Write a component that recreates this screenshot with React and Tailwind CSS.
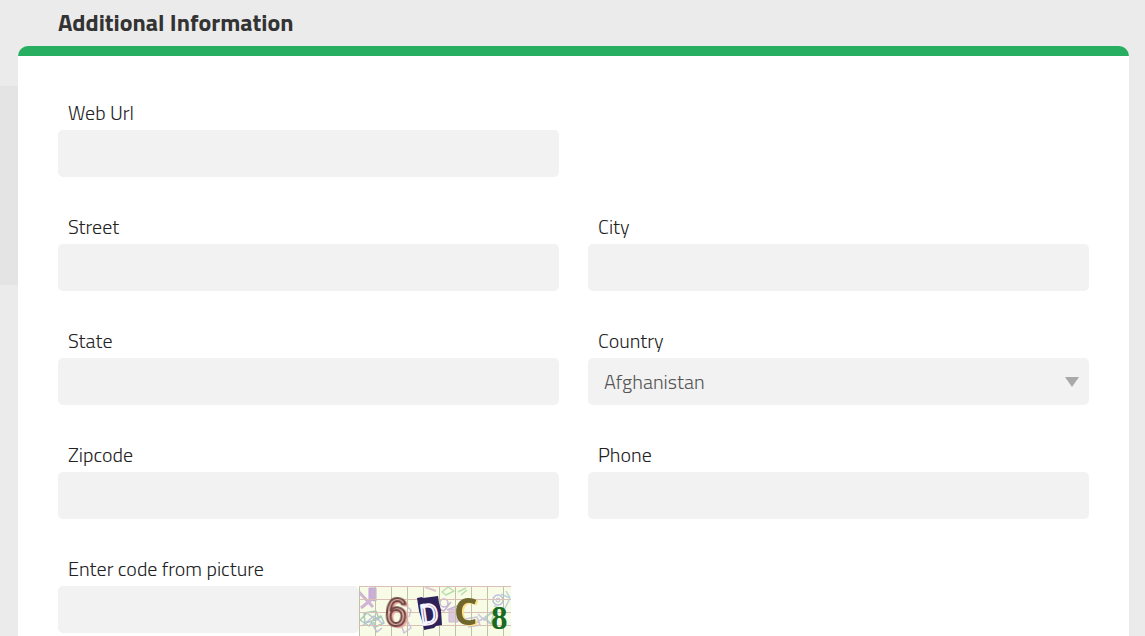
import { useState } from 'react';

const labelClass = 'block mb-[2px] pl-[10px] text-xl leading-[30px] font-light text-[#222]';
const inputClass = 'block w-full h-[47px] rounded-[5px] bg-[#f2f2f2] px-4 text-xl font-light text-[#555] outline-none';

function TextField({ id, label, type = 'text', className = '' }) {
  return (
    <div className={className}>
      <label htmlFor={id} className={labelClass}>{label}</label>
      <input id={id} name={id} type={type} className={inputClass} />
    </div>
  );
}

function CountryField() {
  const [country, setCountry] = useState('Afghanistan');

  return (
    <div>
      <label htmlFor="country" className={labelClass}>Country</label>
      <div className="relative">
        <select
          id="country"
          value={country}
          onChange={(e) => setCountry(e.target.value)}
          className={`${inputClass} appearance-none`}
        >
          <option>Afghanistan</option>
          <option>Albania</option>
          <option>Algeria</option>
        </select>
        <svg
          viewBox="0 0 14 10"
          className="pointer-events-none absolute right-[10px] top-[19px] h-[10px] w-[14px]"
          aria-hidden="true"
        >
          <path d="M0 0h14L7 10z" fill="#a9a9a9" />
        </svg>
      </div>
    </div>
  );
}

function Captcha() {
  const columns = [0, 16, 32, 48, 64, 80, 96, 112, 128, 144];
  const rows = [0, 13, 26, 39, 52];

  return (
    <svg viewBox="0 0 152 60" className="h-[60px] w-[152px] shrink-0" role="img" aria-label="Verification code">
      <rect width="152" height="60" fill="#f8fce6" />

      {/* scribbles behind the characters */}
      <g fill="none" strokeLinejoin="round">
        <path d="M10 2h7v13l-7-1z" fill="#c9addb" stroke="#c3a5d5" />
        <path d="M0 6l14 15M13 13L2 22" stroke="#d0b3d6" strokeWidth="3" />
        <path d="M1 34l7-7 8 6-6 7zM5 27l12-2 3 8-14 4zM14 34l8-4 3 7-9 4z" stroke="#a9cbbd" strokeWidth="1.5" />
        <path d="M3 40l12-10 9 8M12 36l6 10 5-4" stroke="#c0bfdc" strokeWidth="1.5" />
        <path d="M42 38l6-4 4 8-7 5zM46 19l6 5-2 7" stroke="#cfc0e0" strokeWidth="1.5" />
        <path d="M83 6l6-5 6 4-8 4zM99 6l8-4M102 9l6-5" stroke="#b9dfab" strokeWidth="1.5" />
        <path d="M66 1l11 4" stroke="#e0c6ce" strokeWidth="2" />
        <circle cx="85" cy="17" r="4" stroke="#c7b3d5" strokeWidth="1.5" />
        <path d="M78 22l7 3 7-9M88 24l10-4" stroke="#c7b3d5" strokeWidth="1.5" />
        <path d="M90 23h9v13h-9z" fill="#dac9e0" stroke="#cfb8d5" />
        <path d="M106 33l12-2 3 8-11 2zM112 40l13-8 6 6M119 28l6 6 8-9" stroke="#c9c6de" strokeWidth="1.5" />
        <path d="M126 31l9-5-3 12z" stroke="#b4d8ce" strokeWidth="1.5" />
        <circle cx="139" cy="14" r="5" stroke="#bcbde0" strokeWidth="1.5" />
        <circle cx="139" cy="14" r="2" stroke="#bcbde0" />
        <path d="M135 20l10 4 6-12M142 8l9 4M147 5l4 7" stroke="#b9d4de" strokeWidth="1.5" />
      </g>

      {/* grid */}
      {columns.map((x) => (
        <path key={x} d={`M${x + 0.5} 0v60`} stroke="#bfc2a6" />
      ))}
      {rows.map((y) => (
        <path key={y} d={`M0 ${y + 0.5}h152`} stroke="#d9bfb6" />
      ))}

      <path d="M58 12l5-1 1 1 15-2 1 7 2 7 1 15-6 1-2 2-10 2-1-6-4-13z" fill="#2c2158" />

      <g className="font-['Liberation_Sans',sans-serif]" strokeLinejoin="round">
        <text
          x="26"
          y="40"
          fontSize="40"
          fill="#e9b5ae"
          stroke="#6b4540"
          strokeWidth="2"
          className="drop-shadow-[2px_1px_0_#f0aaa3]"
          transform="rotate(5 37 26)"
        >
          6
        </text>
        <text
          x="61"
          y="38"
          fontSize="28"
          fill="#2c2158"
          stroke="#f7f3ff"
          strokeWidth="2"
          className="font-['Roboto',sans-serif]"
          transform="rotate(-8 70 28)"
        >
          D
        </text>
        <text
          x="95"
          y="39"
          fontSize="37"
          fill="#70672d"
          className="font-['Open_Sans',sans-serif] font-bold drop-shadow-[2px_1px_0_#ffe08a]"
        >
          C
        </text>
        <text x="132" y="43" fontSize="33" fill="#176a20" className="font-['Liberation_Serif',serif] font-bold">8</text>
      </g>
    </svg>
  );
}

export default function App() {
  return (
    <div className="flex h-screen overflow-hidden bg-[#ebebeb] pr-4 font-['Titillium_Web','Roboto',sans-serif]">
      <div className="w-[18px] shrink-0 pt-[86px]">
        <div className="h-[199px] bg-[#e4e4e4]" />
      </div>

      <main className="min-w-0 flex-1">
        <h2 className="h-[46px] pl-10 text-2xl leading-[44px] font-bold text-[#333]">
          Additional Information
        </h2>

        <form
          className="min-h-full rounded-t-[10px] border-t-10 border-[#27ae60] bg-white px-10 pt-[42px] pb-10"
          onSubmit={(e) => e.preventDefault()}
        >
          <div className="grid grid-cols-2 gap-x-[29px] gap-y-[35px]">
            <TextField id="web-url" label="Web Url" />
            <TextField id="street" label="Street" className="col-start-1" />
            <TextField id="city" label="City" />
            <TextField id="state" label="State" />
            <CountryField />
            <TextField id="zipcode" label="Zipcode" />
            <TextField id="phone" label="Phone" type="tel" />
            <div>
              <label htmlFor="code" className={labelClass}>Enter code from picture</label>
              <div className="flex items-start">
                <input id="code" name="code" type="text" className={`${inputClass} max-w-[60%]`} />
                <Captcha />
              </div>
            </div>
          </div>
        </form>
      </main>
    </div>
  );
}
